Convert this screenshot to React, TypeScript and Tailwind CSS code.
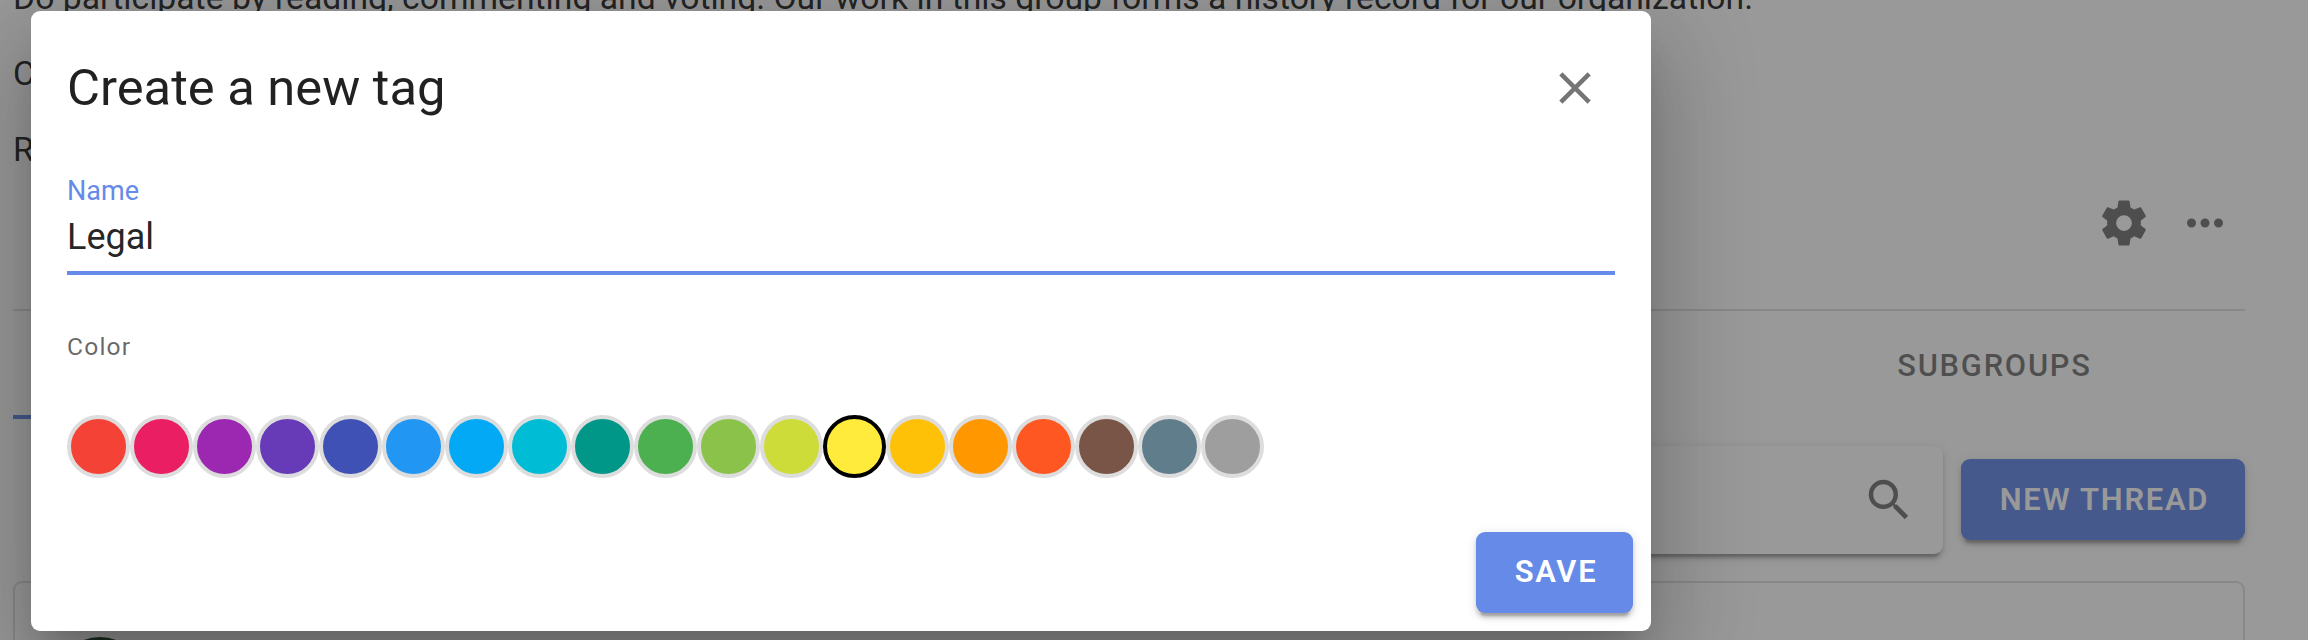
const colors = [
  '#f44336', '#e91e63', '#9c27b0', '#673ab7', '#3f51b5', '#2196f3', '#03a9f4',
  '#00bcd4', '#009688', '#4caf50', '#8bc34a', '#cddc39', '#ffeb3b', '#ffc107',
  '#ff9800', '#ff5722', '#795548', '#607d8b', '#9e9e9e',
];
const selected = '#ffeb3b';

const icons = {
  close: 'M19,6.41L17.59,5L12,10.59L6.41,5L5,6.41L10.59,12L5,17.59L6.41,19L12,13.41L17.59,19L19,17.59L13.41,12L19,6.41Z',
  cog: 'M12,15.5A3.5,3.5 0 0,1 8.5,12A3.5,3.5 0 0,1 12,8.5A3.5,3.5 0 0,1 15.5,12A3.5,3.5 0 0,1 12,15.5M19.43,12.97C19.47,12.65 19.5,12.33 19.5,12C19.5,11.67 19.47,11.34 19.43,11L21.54,9.37C21.73,9.22 21.78,8.95 21.66,8.73L19.66,5.27C19.54,5.05 19.27,4.96 19.05,5.05L16.56,6.05C16.04,5.66 15.5,5.32 14.87,5.07L14.5,2.42C14.46,2.18 14.25,2 14,2H10C9.75,2 9.54,2.18 9.5,2.42L9.13,5.07C8.5,5.32 7.96,5.66 7.44,6.05L4.95,5.05C4.73,4.96 4.46,5.05 4.34,5.27L2.34,8.73C2.21,8.95 2.27,9.22 2.46,9.37L4.57,11C4.53,11.34 4.5,11.67 4.5,12C4.5,12.33 4.53,12.65 4.57,12.97L2.46,14.63C2.27,14.78 2.21,15.05 2.34,15.27L4.34,18.73C4.46,18.95 4.73,19.03 4.95,18.95L7.44,17.94C7.96,18.34 8.5,18.68 9.13,18.93L9.5,21.58C9.54,21.82 9.75,22 10,22H14C14.25,22 14.46,21.82 14.5,21.58L14.87,18.93C15.5,18.67 16.04,18.34 16.56,17.94L19.05,18.95C19.27,19.03 19.54,18.95 19.66,18.73L21.66,15.27C21.78,15.05 21.73,14.78 21.54,14.63L19.43,12.97Z',
  dots: 'M16,12A2,2 0 0,1 18,10A2,2 0 0,1 20,12A2,2 0 0,1 18,14A2,2 0 0,1 16,12M10,12A2,2 0 0,1 12,10A2,2 0 0,1 14,12A2,2 0 0,1 12,14A2,2 0 0,1 10,12M4,12A2,2 0 0,1 6,10A2,2 0 0,1 8,12A2,2 0 0,1 6,14A2,2 0 0,1 4,12Z',
  magnify: 'M9.5,3A6.5,6.5 0 0,1 16,9.5C16,11.11 15.41,12.59 14.44,13.73L14.71,14H15.5L20.5,19L19,20.5L14,15.5V14.71L13.73,14.44C12.59,15.41 11.11,16 9.5,16A6.5,6.5 0 0,1 3,9.5A6.5,6.5 0 0,1 9.5,3M9.5,5C7,5 5,7 5,9.5C5,12 7,14 9.5,14C12,14 14,12 14,9.5C14,7 12,5 9.5,5Z',
};

function Icon({ d }: { d: string }) {
  return (
    <svg viewBox="0 0 24 24" className="size-[54px] fill-black/54">
      <path d={d} />
    </svg>
  );
}

const raised =
  'shadow-[0_6.75px_2.25px_-4.5px_rgba(0,0,0,0.2),0_4.5px_4.5px_0_rgba(0,0,0,0.14),0_2.25px_11.25px_0_rgba(0,0,0,0.12)]';

const buttonBase =
  'flex h-[81px] shrink-0 items-center justify-center rounded-[9px] bg-[#658ae7] pl-[3px] text-[30.9px] leading-[48px] font-semibold tracking-[1.75px] text-white ' + raised;

function GroupPage() {
  return (
    <div className="flex h-full flex-col overflow-hidden bg-white pr-[63px] pl-[13px]">
      <div className="-mt-[29px] flex shrink-0 flex-col gap-[22px] text-[33.72px] leading-[54px] whitespace-nowrap text-black/87">
        <p>Do participate by reading, commenting and voting. Our work in this group forms a history record for our organization.</p>
        <p>C</p>
        <p>R</p>
      </div>
      <div className="mt-[5px] flex h-[81px] shrink-0 justify-end">
        <button className="flex size-[81px] items-center justify-center"><Icon d={icons.cog} /></button>
        <button className="flex size-[81px] items-center justify-center"><Icon d={icons.dots} /></button>
      </div>
      <div className="mt-[46px] h-[2px] shrink-0 bg-black/12" />
      <div className="flex h-[108px] shrink-0 justify-between">
        <div className="w-[420px] border-b-4 border-[#658ae7]" />
        <div className="flex w-[501px] items-center justify-center pt-[2px] text-[30.9px] leading-[48px] font-medium tracking-[1.75px] text-black/54">
          SUBGROUPS
        </div>
      </div>
      <div className="mt-[27px] ml-[400px] flex h-[108px] shrink-0 items-start gap-[18px]">
        <div className={'flex h-full flex-1 items-center justify-end rounded-[9px] bg-white pr-[27px] ' + raised}>
          <Icon d={icons.magnify} />
        </div>
        <button className={buttonBase + ' mt-[13px] w-[284px]'}>NEW THREAD</button>
      </div>
      <div className="mt-[27px] h-[200px] shrink-0 rounded-[9px] border-2 border-black/12 pt-[54px] pl-[40px]">
        <div className="size-[90px] rounded-full bg-[#193a22]" />
      </div>
    </div>
  );
}

function TagDialog() {
  return (
    <div className="flex h-[620px] w-[1620px] flex-col rounded-[9px] bg-white pt-[36px] pr-[18px] pb-[18px] pl-[36px] text-black/87 shadow-[0_24.75px_33.75px_-15.75px_rgba(0,0,0,0.2),0_54px_85.5px_6.75px_rgba(0,0,0,0.14),0_20.25px_103.5px_18px_rgba(0,0,0,0.12)]">
      <div className="flex h-[81px] items-center justify-between pr-[18px]">
        <h1 className="text-[50.7px] leading-[72px]">Create a new tag</h1>
        <button className="flex size-[81px] items-center justify-center"><Icon d={icons.close} /></button>
      </div>
      <div className="mt-[45px] mr-[18px] flex h-[102px] flex-col border-b-4 border-[#658ae7]">
        <label className="text-[27px] leading-[36px] text-[#658ae7]">Name</label>
        <div className="text-[36px] leading-[57px]">Legal</div>
      </div>
      <div className="mt-[53px] text-[24.6px] leading-[37px] tracking-[1.2px] text-black/60">Color</div>
      <div className="mt-[50px] flex">
        {colors.map((c) => (
          <div
            key={c}
            className={'size-[63px] rounded-full border-4 ' + (c === selected ? 'border-black' : 'border-[#ddd]')}
            style={{ backgroundColor: c }}
          />
        ))}
      </div>
      <button className={buttonBase + ' mt-[54px] w-[157px] self-end pb-[2px]'}>SAVE</button>
    </div>
  );
}

export default function App() {
  return (
    <div className="relative h-[640px] w-[2308px] overflow-hidden font-[Roboto,sans-serif]">
      <GroupPage />
      <div className="absolute inset-0 bg-[#212121]/46" />
      <div className="absolute inset-0 pt-[11px] pl-[31px]">
        <TagDialog />
      </div>
    </div>
  );
}
